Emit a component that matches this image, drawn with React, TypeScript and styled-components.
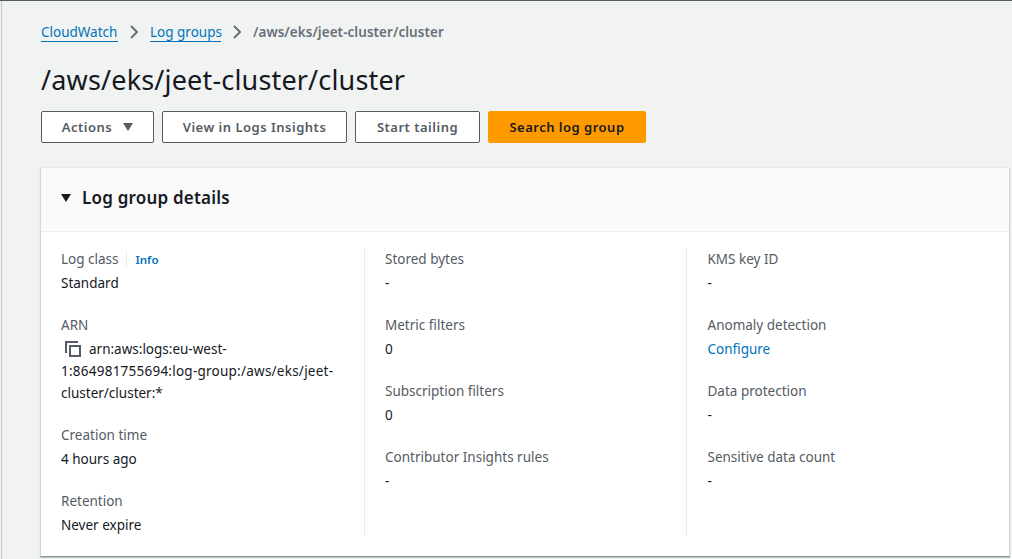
import React from "react";
import styled, { createGlobalStyle } from "styled-components";

const GlobalStyle = createGlobalStyle`
  *, *::before, *::after { box-sizing: border-box; }
  body {
    margin: 0;
    background: #f1f3f3;
    color: #16191f;
    font-family: "Noto Sans", "Open Sans", sans-serif;
    font-size: 13.5px;
    line-height: 22px;
    overflow: hidden;
  }
`;

const Page = styled.main`
  height: 559px;
  margin-left: 1px;
  padding: 20px 2px 0 39px;
  border-left: 1px solid #c6cacd;
  background: #f1f3f3;
`;

const TopEdge = styled.div`
  height: 1px;
  margin-bottom: -1px;
  position: relative;
  background: #545b64;
`;

const Breadcrumbs = styled.nav`
  display: flex;
  align-items: center;
  height: 24px;
`;

const Crumb = styled.a<{ $width: number }>`
  width: ${(p) => p.$width}px;
  height: 20px;
  line-height: 20px;
  margin-top: -1px;
  border-bottom: 1px solid #0073bb;
  color: #0073bb;
  white-space: nowrap;
`;

const CurrentCrumb = styled.span`
  color: #687078;
  font-size: 13.5px;
  font-weight: 600;
  letter-spacing: 0.05px;
`;

const Chevron = styled.svg`
  width: 8px;
  height: 14px;
  margin: 0 12px;
  fill: none;
  stroke: #687078;
  stroke-width: 2;
`;

const Title = styled.h1`
  margin: 18px 0 0;
  height: 36px;
  font-size: 27px;
  line-height: 36px;
  font-weight: 400;
  letter-spacing: 0.17px;
`;

const Actions = styled.div`
  display: flex;
  gap: 8px;
  margin-top: 13px;
`;

const Button = styled.button<{ $primary?: boolean; $width: number }>`
  display: flex;
  align-items: center;
  justify-content: center;
  gap: 11px;
  width: ${(p) => p.$width}px;
  height: 32px;
  padding: 0;
  border: 1px solid ${(p) => (p.$primary ? "#ff9900" : "#545b64")};
  border-radius: 2px;
  background: ${(p) => (p.$primary ? "#ff9900" : "#ffffff")};
  color: ${(p) => (p.$primary ? "#16191f" : "#545b64")};
  font: 600 13px/20px "Noto Sans", sans-serif;
  letter-spacing: 0.5px;
  white-space: nowrap;
`;

const Caret = styled.svg`
  width: 10px;
  height: 8px;
  fill: currentColor;
`;

const Panel = styled.section`
  margin-top: 24px;
  height: 390px;
  width: 970px;
  margin-left: -1px;
  border: 1px solid #d0d5d5;
  border-top-color: #e8ebeb;
  border-bottom-color: #879596;
  background: #ffffff;
  box-shadow: 0 1px 1px rgba(0, 28, 36, 0.2);
`;

const PanelHeader = styled.header`
  display: flex;
  align-items: center;
  gap: 11px;
  height: 64px;
  padding: 0 20px 4px;
  border-bottom: 1px solid #eaeded;
  background: #fafafa;
`;

const PanelTitle = styled.h2`
  margin: 0;
  font-size: 17px;
  font-weight: 600;
  letter-spacing: 0.2px;
`;

const Columns = styled.div`
  display: grid;
  grid-template-columns: 303px 322px 1fr;
  padding: 16px 20px 20px;
`;

const Column = styled.dl`
  display: flex;
  flex-direction: column;
  gap: 20px;
  height: 288px;
  margin: 0;
  & + & {
    padding-left: 20px;
    border-left: 1px solid #eaeded;
  }
  &:last-child {
    padding-left: 20.5px;
  }
`;

const Field = styled.div`
  display: flex;
  flex-direction: column;
  gap: 2px;
`;

const Label = styled.dt`
  display: flex;
  align-items: center;
  height: 22px;
  color: #545b64;
`;

const Value = styled.dd<{ $link?: boolean }>`
  margin: 0;
  color: ${(p) => (p.$link ? "#0073bb" : "#16191f")};
`;

const Info = styled.a`
  display: flex;
  align-items: center;
  height: 18px;
  margin-left: 7px;
  padding: 2px 0 0 9px;
  border-left: 1px solid #eaeded;
  color: #0073bb;
  font-size: 11.5px;
  font-weight: 600;
`;

const ArnNumber = styled.span`
  letter-spacing: 0.24px;
`;

const CopyIcon = styled.svg`
  width: 16px;
  height: 16px;
  margin: 0 8px 0 4px;
  vertical-align: -3px;
  fill: none;
  stroke: #545b64;
  stroke-width: 2;
`;

type FieldData = { label: string; value: React.ReactNode; info?: boolean; link?: boolean };

const columns: FieldData[][] = [
  [
    { label: "Log class", value: "Standard", info: true },
    {
      label: "ARN",
      value: (
        <>
          <CopyIcon viewBox="0 0 16 16">
            <path d="M1 12V1h12M5 5h10v10H5z" />
          </CopyIcon>
          arn:aws:logs:eu-west-
          <br />
          <ArnNumber>1:864981755694:log-group:/aws/eks/jeet-</ArnNumber>
          <br />
          cluster/cluster:*
        </>
      ),
    },
    { label: "Creation time", value: "4 hours ago" },
    { label: "Retention", value: "Never expire" },
  ],
  [
    { label: "Stored bytes", value: "-" },
    { label: "Metric filters", value: "0" },
    { label: "Subscription filters", value: "0" },
    { label: "Contributor Insights rules", value: "-" },
  ],
  [
    { label: "KMS key ID", value: "-" },
    { label: "Anomaly detection", value: "Configure", link: true },
    { label: "Data protection", value: "-" },
    { label: "Sensitive data count", value: "-" },
  ],
];

const Separator = () => (
  <Chevron viewBox="0 0 8 14">
    <path d="M1 1l6 6-6 6" />
  </Chevron>
);

export default function App() {
  return (
    <>
      <GlobalStyle />
      <TopEdge />
      <Page>
        <Breadcrumbs>
          <Crumb $width={77}>CloudWatch</Crumb>
          <Separator />
          <Crumb $width={71}>Log groups</Crumb>
          <Separator />
          <CurrentCrumb>/aws/eks/jeet-cluster/cluster</CurrentCrumb>
        </Breadcrumbs>
        <Title>/aws/eks/jeet-cluster/cluster</Title>
        <Actions>
          <Button $width={113}>
            Actions
            <Caret viewBox="0 0 10 8">
              <path d="M0 0h10L5 8z" />
            </Caret>
          </Button>
          <Button $width={185}>View in Logs Insights</Button>
          <Button $width={125}>Start tailing</Button>
          <Button $width={158} $primary>
            Search log group
          </Button>
        </Actions>
        <Panel>
          <PanelHeader>
            <Caret viewBox="0 0 10 8">
              <path d="M0 0h10L5 8z" />
            </Caret>
            <PanelTitle>Log group details</PanelTitle>
          </PanelHeader>
          <Columns>
            {columns.map((fields, i) => (
              <Column key={i}>
                {fields.map((f) => (
                  <Field key={f.label}>
                    <Label>
                      {f.label}
                      {f.info && <Info>Info</Info>}
                    </Label>
                    <Value $link={f.link}>{f.value}</Value>
                  </Field>
                ))}
              </Column>
            ))}
          </Columns>
        </Panel>
      </Page>
    </>
  );
}
